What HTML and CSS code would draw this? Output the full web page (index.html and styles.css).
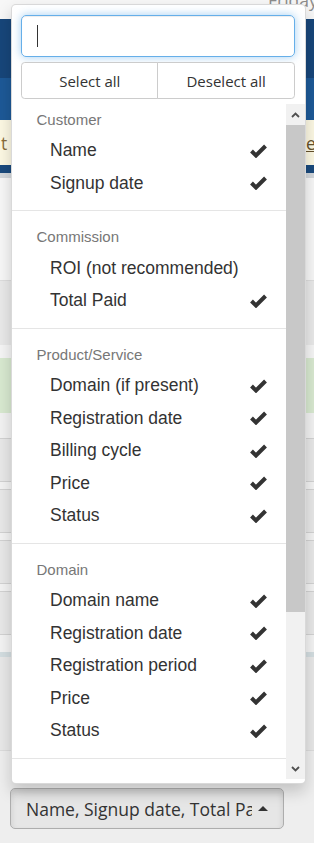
FILE: index.html
```html
<!DOCTYPE html>
<html lang="en">
<head>
  <meta charset="UTF-8" />
  <meta name="viewport" content="width=device-width, initial-scale=1.0"/>
  <title>Affiliate report columns</title>
  <link rel="stylesheet" href="styles.css">
</head>
<body>

<div class="page">
  <div class="topbar"><span class="date">Friday, 12 January</span></div>
  <div class="navbar"></div>
  <div class="subnav"></div>
  <div class="alert">
    <span class="alert-msg">t</span>
    <a class="alert-link" href="#">edit</a>
  </div>
  <div class="nav-strip"></div>
  <div class="shade"></div>
  <div class="panel"></div>

  <!-- report rows behind the dropdown -->
  <div class="rows">
    <div class="tr tr-head"></div>
    <div class="tr tr-gap"></div>
    <div class="tr tr-success"></div>
    <div class="tr tr-gap2"></div>
    <div class="tr tr-big"></div>
    <div class="tr tr-sub"></div>
    <div class="tr tr-big"></div>
    <div class="tr tr-sub"></div>
    <div class="tr tr-big"></div>
    <div class="tr tr-sub"></div>
    <div class="tr tr-big"></div>
    <div class="tr tr-foot"></div>
    <div class="tr tr-info"></div>
    <div class="tr tr-total"></div>
    <div class="tr tr-end"></div>
  </div>

  <div class="toolbar">
    <div class="select dropup">
      <button class="select-btn" type="button">
        <span class="filter-option">Name, Signup date, Total Paid</span>
        <span class="caret"></span>
      </button>

      <div class="menu">
        <div class="searchbox">
          <div class="search-input"><span class="text-cursor"></span></div>
        </div>
        <div class="actions">
          <button type="button">Select all</button>
          <button type="button">Deselect all</button>
        </div>

        <div class="scroll">
          <ul class="options">
            <li class="group-header">Customer</li>
            <li class="opt">Name <svg class="check" viewBox="0 0 17 14"><polyline points="1.5,7 6,11.5 15.5,2"/></svg></li>
            <li class="opt">Signup date <svg class="check" viewBox="0 0 17 14"><polyline points="1.5,7 6,11.5 15.5,2"/></svg></li>
            <li class="divider"></li>

            <li class="group-header">Commission</li>
            <li class="opt">ROI (not recommended)</li>
            <li class="opt">Total Paid <svg class="check" viewBox="0 0 17 14"><polyline points="1.5,7 6,11.5 15.5,2"/></svg></li>
            <li class="divider"></li>

            <li class="group-header">Product/Service</li>
            <li class="opt">Domain (if present) <svg class="check" viewBox="0 0 17 14"><polyline points="1.5,7 6,11.5 15.5,2"/></svg></li>
            <li class="opt">Registration date <svg class="check" viewBox="0 0 17 14"><polyline points="1.5,7 6,11.5 15.5,2"/></svg></li>
            <li class="opt">Billing cycle <svg class="check" viewBox="0 0 17 14"><polyline points="1.5,7 6,11.5 15.5,2"/></svg></li>
            <li class="opt">Price <svg class="check" viewBox="0 0 17 14"><polyline points="1.5,7 6,11.5 15.5,2"/></svg></li>
            <li class="opt">Status <svg class="check" viewBox="0 0 17 14"><polyline points="1.5,7 6,11.5 15.5,2"/></svg></li>
            <li class="divider"></li>

            <li class="group-header">Domain</li>
            <li class="opt">Domain name <svg class="check" viewBox="0 0 17 14"><polyline points="1.5,7 6,11.5 15.5,2"/></svg></li>
            <li class="opt">Registration date <svg class="check" viewBox="0 0 17 14"><polyline points="1.5,7 6,11.5 15.5,2"/></svg></li>
            <li class="opt">Registration period <svg class="check" viewBox="0 0 17 14"><polyline points="1.5,7 6,11.5 15.5,2"/></svg></li>
            <li class="opt">Price <svg class="check" viewBox="0 0 17 14"><polyline points="1.5,7 6,11.5 15.5,2"/></svg></li>
            <li class="opt">Status <svg class="check" viewBox="0 0 17 14"><polyline points="1.5,7 6,11.5 15.5,2"/></svg></li>
            <li class="divider"></li>

            <li class="group-header">Addon</li>
            <li class="opt">Addon name</li>
            <li class="opt">Price</li>
            <li class="opt">Status</li>
          </ul>

          <!-- scrollbar -->
          <div class="scrollbar">
            <div class="sb-btn"><svg viewBox="0 0 9 6"><polyline points="1,5 4.5,1.5 8,5"/></svg></div>
            <div class="sb-thumb"></div>
            <div class="sb-track"></div>
            <div class="sb-btn"><svg viewBox="0 0 9 6"><polyline points="1,1 4.5,4.5 8,1"/></svg></div>
          </div>
        </div>
      </div>
    </div>
  </div>
</div>

</body>
</html>
```

FILE: styles.css
```css
* {
  box-sizing: border-box;
}
body {
  margin: 0;
  background: #eeeeee;
  font-family: 'Open Sans', sans-serif;
  height: 843px;
  overflow: hidden;
  color: #333;
}
.page {
  width: 314px;
}

/* background page */
.topbar {
  height: 19px;
  background: #f7f7f7;
  overflow: hidden;
  white-space: nowrap;
  padding-left: 268px;
}
.date {
  display: block;
  margin-top: -12px;
  font-size: 17.5px;
  line-height: 25px;
  color: #8c8c8c;
}
.navbar {
  height: 59px;
  background: #17467a;
}
.subnav {
  height: 42px;
  background: #1d5997;
}
.alert {
  height: 45px;
  background: #fcf8e3;
  display: flex;
  align-items: center;
  font-size: 17.5px;
  color: #8a6d3b;
  padding-left: 1px;
  overflow: hidden;
}
.alert-link {
  margin-left: auto;
  width: 8px;
  overflow: hidden;
  color: #66512c;
  white-space: nowrap;
}
.nav-strip {
  height: 8px;
  background: #1a4a7d;
}
.shade {
  height: 5px;
  background: #d3d7db;
}
.panel {
  height: 103px;
  background: #f7f7f7;
  border-bottom: 1px solid #dddddd;
}
.tr {
  border-bottom: 1px solid #d2d2d2;
}
.tr-head {
  height: 64px;
  background: #e9e9e9;
  border: 0;
}
.tr-gap {
  height: 13px;
  background: #f5f5f5;
  border: 0;
}
.tr-success {
  height: 55px;
  background: #d8e9d0;
  border: 0;
}
.tr-gap2 {
  height: 26px;
  background: #f2f2f2;
}
.tr-big {
  height: 43px;
  background: #e8e8e8;
}
.tr-sub {
  height: 8px;
  background: #f3f3f3;
}
.tr-foot {
  height: 17px;
  background: #f3f3f3;
  border: 0;
}
.tr-info {
  height: 5px;
  background: #d3dde0;
  border: 0;
}
.tr-total {
  height: 94px;
  background: #e8e8e8;
  border-bottom: 1px solid #dcdcdc;
}
.tr-end {
  height: 34px;
  background: #eeeeee;
  border: 0;
}

/* select */
.toolbar {
  padding: 3px 0 0 10px;
}
.select {
  position: relative;
  width: 274px;
}
.select-btn {
  display: flex;
  align-items: center;
  width: 100%;
  height: 41px;
  padding: 0 15px;
  background: #e6e6e6;
  border: 1.25px solid #adadad;
  border-radius: 5px;
  box-shadow: inset 0 3.75px 6.25px rgba(0,0,0,0.125);
  font-family: 'Open Sans', sans-serif;
  font-size: 17.5px;
  color: #333;
  text-align: left;
}
.filter-option {
  flex: 1;
  overflow: hidden;
  white-space: nowrap;
  margin-right: 6px;
}
.caret {
  width: 0;
  height: 0;
  border-left: 5px solid transparent;
  border-right: 5px solid transparent;
  border-bottom: 5px solid #333;
}

/* dropdown menu */
.menu {
  position: absolute;
  left: 0.5px;
  bottom: calc(100% + 4px);
  width: 295px;
  display: flex;
  flex-direction: column;
  background: #fff;
  border: 1.25px solid rgba(0,0,0,0.15);
  border-radius: 5px;
  box-shadow: 0 7.5px 15px rgba(0,0,0,0.175);
  padding: 5.5px 0 4px;
}
.searchbox {
  padding: 5px 9.5px;
}
.search-input {
  height: 42px;
  display: flex;
  align-items: center;
  padding: 0 15px;
  border: 1.25px solid #66afe9;
  border-radius: 5px;
  box-shadow: inset 0 1px 1px rgba(0,0,0,0.075), 0 0 10px rgba(102,175,233,0.6);
}
.text-cursor {
  width: 1px;
  height: 22px;
  background: #333;
}
.actions {
  display: flex;
  padding: 0 9.5px 5px;
}
.actions button {
  flex: 1;
  height: 37px;
  background: #fff;
  border: 1.25px solid #ccc;
  border-radius: 3.75px 0 0 3.75px;
  font-family: 'Open Sans', sans-serif;
  font-size: 15px;
  color: #333;
}
.actions button + button {
  margin-left: -1.25px;
  border-radius: 0 3.75px 3.75px 0;
}

.scroll {
  display: flex;
  height: 675px;
}
.options {
  flex: 1;
  margin: 0;
  padding: 1px 0 0;
  list-style: none;
  overflow: hidden;
  font-family: 'Liberation Sans', Arial, sans-serif;
}
.group-header {
  padding: 4px 25px 3.5px;
  font-size: 15px;
  line-height: 21.43px;
  color: #777;
}
.opt {
  display: flex;
  align-items: center;
  justify-content: space-between;
  height: 32.5px;
  padding: 1.5px 19px 0 38.5px;
  font-size: 17.5px;
  color: #333;
}
.check {
  width: 17px;
  height: 14px;
  fill: none;
  stroke: #333;
  stroke-width: 4;
}
.divider {
  height: 1px;
  margin: 11.25px 0;
  background: #e5e5e5;
}

.scrollbar {
  width: 18.5px;
  display: flex;
  flex-direction: column;
  background: #f1f1f1;
}
.sb-btn {
  height: 21px;
  display: flex;
  align-items: center;
  justify-content: center;
}
.sb-btn svg {
  width: 9px;
  height: 6px;
  fill: none;
  stroke: #505050;
  stroke-width: 1.8;
}
.sb-thumb {
  height: 487px;
  background: #c8c8c8;
}
.sb-track {
  flex: 1;
}
```
